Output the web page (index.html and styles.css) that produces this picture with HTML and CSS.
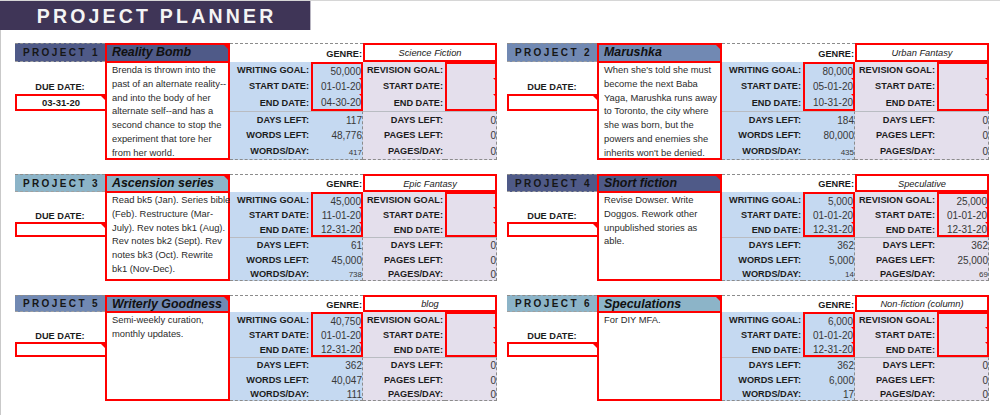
FILE: index.html
```html
<!DOCTYPE html>
<html>
<head>
<meta charset="utf-8">
<link rel="stylesheet" href="styles.css">
</head>
<body>
<header class="title">PROJECT PLANNER</header>
<main class="sheet">
  <div class="band band-1">
    <section class="block hc-dark">
      <div class="plabel">PROJECT 1</div>
      <div class="card">
        <div class="card-title cm">Reality Bomb</div>
        <p class="card-desc">Brenda is thrown into the<br>past of an alternate reality--<br>and into the body of her<br>alternate self--and has a<br>second chance to stop the<br>experiment that tore her<br>from her world.</p>
      </div>
      <div class="genre-label">GENRE:</div>
      <div class="genre-val">Science Fiction</div>
      <div class="due-label">DUE DATE:</div>
      <div class="due-box cm">03-31-20</div>
      <div class="labels goal w"><span>WRITING GOAL:</span><span>START DATE:</span><span>END DATE:</span></div>
      <div class="vals goal w"><span>50,000</span><span class="cm">01-01-20</span><span class="cm">04-30-20</span></div>
      <div class="labels goal r"><span>REVISION GOAL:</span><span>START DATE:</span><span>END DATE:</span></div>
      <div class="vals goal r"><span></span><span class="cm"></span><span class="cm"></span></div>
      <div class="labels stat w"><span>DAYS LEFT:</span><span>WORDS LEFT:</span><span>WORDS/DAY:</span></div>
      <div class="vals stat w"><span>117</span><span>48,776</span><span class="sm">417</span></div>
      <div class="labels stat r"><span>DAYS LEFT:</span><span>PAGES LEFT:</span><span>PAGES/DAY:</span></div>
      <div class="vals stat r"><span>0</span><span>0</span><span>0</span></div>
    </section>
    <section class="block hc-mid">
      <div class="plabel">PROJECT 2</div>
      <div class="card">
        <div class="card-title cm">Marushka</div>
        <p class="card-desc">When she's told she must<br>become the next Baba<br>Yaga, Marushka runs away<br>to Toronto, the city where<br>she was born, but the<br>powers and enemies she<br>inherits won't be denied.</p>
      </div>
      <div class="genre-label">GENRE:</div>
      <div class="genre-val">Urban Fantasy</div>
      <div class="due-label">DUE DATE:</div>
      <div class="due-box cm"></div>
      <div class="labels goal w"><span>WRITING GOAL:</span><span>START DATE:</span><span>END DATE:</span></div>
      <div class="vals goal w"><span>80,000</span><span class="cm">05-01-20</span><span class="cm">10-31-20</span></div>
      <div class="labels goal r"><span>REVISION GOAL:</span><span>START DATE:</span><span>END DATE:</span></div>
      <div class="vals goal r"><span></span><span class="cm"></span><span class="cm"></span></div>
      <div class="labels stat w"><span>DAYS LEFT:</span><span>WORDS LEFT:</span><span>WORDS/DAY:</span></div>
      <div class="vals stat w"><span>184</span><span>80,000</span><span class="sm">435</span></div>
      <div class="labels stat r"><span>DAYS LEFT:</span><span>PAGES LEFT:</span><span>PAGES/DAY:</span></div>
      <div class="vals stat r"><span>0</span><span>0</span><span>0</span></div>
    </section>
  </div>

  <div class="band band-2">
    <section class="block hc-teal">
      <div class="plabel">PROJECT 3</div>
      <div class="card">
        <div class="card-title cm">Ascension series</div>
        <p class="card-desc">Read bk5 (Jan). Series bible<br>(Feb). Restructure (Mar-<br>July). Rev notes bk1 (Aug).<br>Rev notes bk2 (Sept). Rev<br>notes bk3 (Oct). Rewrite<br>bk1 (Nov-Dec).</p>
      </div>
      <div class="genre-label">GENRE:</div>
      <div class="genre-val">Epic Fantasy</div>
      <div class="due-label">DUE DATE:</div>
      <div class="due-box cm"></div>
      <div class="labels goal w"><span>WRITING GOAL:</span><span>START DATE:</span><span>END DATE:</span></div>
      <div class="vals goal w"><span>45,000</span><span class="cm">11-01-20</span><span class="cm">12-31-20</span></div>
      <div class="labels goal r"><span>REVISION GOAL:</span><span>START DATE:</span><span>END DATE:</span></div>
      <div class="vals goal r"><span></span><span class="cm"></span><span class="cm"></span></div>
      <div class="labels stat w"><span>DAYS LEFT:</span><span>WORDS LEFT:</span><span>WORDS/DAY:</span></div>
      <div class="vals stat w"><span>61</span><span>45,000</span><span class="sm">738</span></div>
      <div class="labels stat r"><span>DAYS LEFT:</span><span>PAGES LEFT:</span><span>PAGES/DAY:</span></div>
      <div class="vals stat r"><span>0</span><span>0</span><span>0</span></div>
    </section>
    <section class="block hc-dark">
      <div class="plabel">PROJECT 4</div>
      <div class="card">
        <div class="card-title cm">Short fiction</div>
        <p class="card-desc">Revise Dowser. Write<br>Doggos. Rework other<br>unpublished stories as<br>able.</p>
      </div>
      <div class="genre-label">GENRE:</div>
      <div class="genre-val">Speculative</div>
      <div class="due-label">DUE DATE:</div>
      <div class="due-box cm"></div>
      <div class="labels goal w"><span>WRITING GOAL:</span><span>START DATE:</span><span>END DATE:</span></div>
      <div class="vals goal w"><span>5,000</span><span class="cm">01-01-20</span><span class="cm">12-31-20</span></div>
      <div class="labels goal r"><span>REVISION GOAL:</span><span>START DATE:</span><span>END DATE:</span></div>
      <div class="vals goal r"><span>25,000</span><span class="cm">01-01-20</span><span class="cm">12-31-20</span></div>
      <div class="labels stat w"><span>DAYS LEFT:</span><span>WORDS LEFT:</span><span>WORDS/DAY:</span></div>
      <div class="vals stat w"><span>362</span><span>5,000</span><span class="sm">14</span></div>
      <div class="labels stat r"><span>DAYS LEFT:</span><span>PAGES LEFT:</span><span>PAGES/DAY:</span></div>
      <div class="vals stat r"><span>362</span><span>25,000</span><span class="sm">69</span></div>
    </section>
  </div>

  <div class="band band-3">
    <section class="block hc-mid">
      <div class="plabel">PROJECT 5</div>
      <div class="card">
        <div class="card-title cm">Writerly Goodness</div>
        <p class="card-desc">Semi-weekly curation,<br>monthly updates.</p>
      </div>
      <div class="genre-label">GENRE:</div>
      <div class="genre-val">blog</div>
      <div class="due-label">DUE DATE:</div>
      <div class="due-box cm"></div>
      <div class="labels goal w"><span>WRITING GOAL:</span><span>START DATE:</span><span>END DATE:</span></div>
      <div class="vals goal w"><span>40,750</span><span class="cm">01-01-20</span><span class="cm">12-31-20</span></div>
      <div class="labels goal r"><span>REVISION GOAL:</span><span>START DATE:</span><span>END DATE:</span></div>
      <div class="vals goal r"><span></span><span class="cm"></span><span class="cm"></span></div>
      <div class="labels stat w"><span>DAYS LEFT:</span><span>WORDS LEFT:</span><span>WORDS/DAY:</span></div>
      <div class="vals stat w"><span>362</span><span>40,047</span><span>111</span></div>
      <div class="labels stat r"><span>DAYS LEFT:</span><span>PAGES LEFT:</span><span>PAGES/DAY:</span></div>
      <div class="vals stat r"><span>0</span><span>0</span><span>0</span></div>
    </section>
    <section class="block hc-teal">
      <div class="plabel">PROJECT 6</div>
      <div class="card">
        <div class="card-title cm">Speculations</div>
        <p class="card-desc">For DIY MFA.</p>
      </div>
      <div class="genre-label">GENRE:</div>
      <div class="genre-val">Non-fiction (column)</div>
      <div class="due-label">DUE DATE:</div>
      <div class="due-box cm"></div>
      <div class="labels goal w"><span>WRITING GOAL:</span><span>START DATE:</span><span>END DATE:</span></div>
      <div class="vals goal w"><span>6,000</span><span class="cm">01-01-20</span><span class="cm">12-31-20</span></div>
      <div class="labels goal r"><span>REVISION GOAL:</span><span>START DATE:</span><span>END DATE:</span></div>
      <div class="vals goal r"><span></span><span class="cm"></span><span class="cm"></span></div>
      <div class="labels stat w"><span>DAYS LEFT:</span><span>WORDS LEFT:</span><span>WORDS/DAY:</span></div>
      <div class="vals stat w"><span>362</span><span>6,000</span><span>17</span></div>
      <div class="labels stat r"><span>DAYS LEFT:</span><span>PAGES LEFT:</span><span>PAGES/DAY:</span></div>
      <div class="vals stat r"><span>0</span><span>0</span><span>0</span></div>
    </section>
  </div>
</main>
</body>
</html>
```

FILE: styles.css
```css
* { box-sizing: border-box; margin: 0; padding: 0; }

html, body {
  width: 1000px;
  height: 415px;
  overflow: hidden;
  background: #ffffff;
}

body {
  font-family: "Liberation Sans", Arial, sans-serif;
  color: #1c1c1c;
  border-top: 1px solid #d6d6d6;
}

.title {
  width: 311px;
  height: 29px;
  background: #3f3557;
  border-right: 1px solid #b9b6c2;
  color: #f4f4f4;
  font-weight: bold;
  font-size: 19.5px;
  letter-spacing: 3.2px;
  padding-left: 3.2px;
  line-height: 30px;
  text-align: center;
  white-space: nowrap;
}

.sheet {
  display: flex;
  flex-direction: column;
  gap: 14px;
  height: 385px;
  padding: 13px 0 0 14px;
  border-left: 1px solid #c9c9c9;
}

.band {
  display: flex;
  gap: 10px;
}

.block {
  --hh: 18px;
  display: grid;
  grid-template-columns: 90px 125px 81px 52px 82px 52px;
  grid-template-rows: 18px 15px 15px 15px 15px 15px 14px;
}

.band-1 .block {
  --hh: 19px;
  grid-template-rows: 19px 16px 16px 17px 16px 16px 17px;
}

.band-3 .block {
  --hh: 17px;
  grid-template-rows: 17px 15px 15px 15px 15px 15px 14px;
}

.hc-dark { --hc: #4f5a88; }
.hc-mid  { --hc: #7189b3; }
.hc-teal { --hc: #8cb4c8; }

.plabel {
  grid-column: 1;
  grid-row: 1;
  background: var(--hc);
  border-top: 1px dashed #8c8c8c;
  border-bottom: 1px dashed #a0a0a0;
  display: flex;
  align-items: center;
  justify-content: center;
  font-weight: bold;
  font-size: 10px;
  letter-spacing: 2.4px;
  padding-left: 3px;
  color: #161616;
  white-space: nowrap;
}

.card {
  grid-column: 2;
  grid-row: 1 / 8;
  border: 2px solid #ff0000;
  display: flex;
  flex-direction: column;
  background: #ffffff;
}

.card-title {
  flex: none;
  height: calc(var(--hh) - 1px);
  background: var(--hc);
  border-bottom: 2px solid #ff0000;
  font-weight: bold;
  font-style: italic;
  font-size: 12.4px;
  line-height: 15px;
  padding-left: 5px;
  color: #111;
  white-space: nowrap;
}

.card-desc {
  font-size: 9.4px;
  line-height: 13.8px;
  padding: 0 2px 0 5px;
  color: #2b2b2b;
  white-space: nowrap;
}

.genre-label {
  grid-column: 3 / 5;
  grid-row: 1;
  border-top: 1px dashed #8c8c8c;
  display: flex;
  align-items: center;
  justify-content: flex-end;
  padding: 1px 1px 0 0;
  font-weight: bold;
  font-size: 9.2px;
}

.genre-val {
  grid-column: 5 / 7;
  grid-row: 1;
  border: 2px solid #ff0000;
  display: flex;
  align-items: center;
  justify-content: center;
  font-style: italic;
  font-size: 9.3px;
  color: #222;
  padding-top: 1px;
}

.due-label {
  grid-column: 1;
  grid-row: 3;
  display: flex;
  align-items: center;
  justify-content: center;
  padding-top: 2px;
  font-weight: bold;
  font-size: 9.2px;
}

.due-box {
  grid-column: 1;
  grid-row: 4;
  border: 2px solid #ff0000;
  border-right: none;
  display: flex;
  align-items: center;
  justify-content: center;
  font-weight: bold;
  font-size: 9.5px;
  color: #1a1a1a;
}

.labels, .vals {
  display: grid;
  grid-template-rows: subgrid;
}

.goal { grid-row: 2 / 5; }
.stat { grid-row: 5 / 8; border-top: 1px solid #b9bcc2; border-bottom: 1px dashed #8c8c8c; }

.w { background: #c5d9f1; }
.r { background: #e4dfec; }

.labels.w { grid-column: 3; }
.vals.w   { grid-column: 4; }
.labels.r { grid-column: 5; }
.vals.r   { grid-column: 6; }

.labels span, .vals span {
  display: flex;
  align-items: center;
  justify-content: flex-end;
  padding-top: 1px;
  line-height: 11px;
  white-space: nowrap;
}

.labels span {
  font-weight: bold;
  font-size: 9.2px;
  color: #1c1c1c;
  padding-right: 2px;
}

.vals span {
  font-size: 10px;
  color: #383838;
  padding-right: 0;
}

.vals span.sm { font-size: 8px; padding-top: 2px; }

.vals.goal {
  border: 2px solid #ff0000;
}

.vals.stat.w { border-right: 1px dashed #8c8c8c; }
.vals.stat.r { border-right: 1px dashed #8c8c8c; }

.cm { position: relative; }
.cm::after {
  content: "";
  position: absolute;
  top: 0;
  right: 0;
  border-top: 4px solid #ff0000;
  border-left: 4px solid transparent;
}
.vals .cm::after { right: -2px; }
```
